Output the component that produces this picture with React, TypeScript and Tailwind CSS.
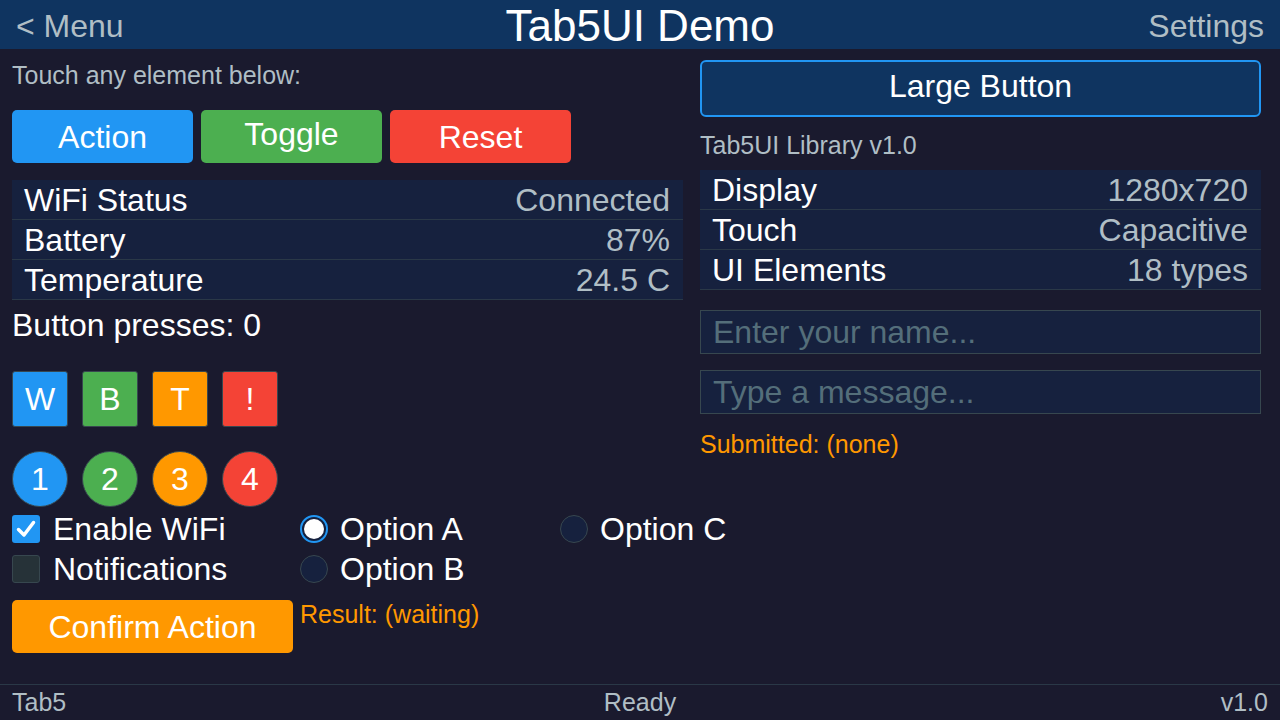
import React from "react";

const font = { fontFamily: '"Liberation Sans", Arial, sans-serif' };

const leftRows = [
  { label: "WiFi Status", value: "Connected" },
  { label: "Battery", value: "87%" },
  { label: "Temperature", value: "24.5 C" },
];

const rightRows = [
  { label: "Display", value: "1280x720" },
  { label: "Touch", value: "Capacitive" },
  { label: "UI Elements", value: "18 types" },
];

const tiles = [
  { text: "W", bg: "bg-[#2196f3]" },
  { text: "B", bg: "bg-[#4caf50]" },
  { text: "T", bg: "bg-[#ff9800]" },
  { text: "!", bg: "bg-[#f44336]" },
];

const dots = [
  { text: "1", bg: "bg-[#2196f3]" },
  { text: "2", bg: "bg-[#4caf50]" },
  { text: "3", bg: "bg-[#ff9800]" },
  { text: "4", bg: "bg-[#f44336]" },
];

function InfoTable({ rows }: { rows: { label: string; value: string }[] }) {
  return (
    <div className="bg-[#16213e]">
      {rows.map((r) => (
        <div
          key={r.label}
          className="flex h-[40px] items-center justify-between border-b border-[#2a3847] pl-[12px] pr-[13px] text-[32px] leading-[40px]"
        >
          <span className="text-white">{r.label}</span>
          <span className="text-[#b0bec5]">{r.value}</span>
        </div>
      ))}
    </div>
  );
}

function Radio({ checked, label }: { checked?: boolean; label: string }) {
  return (
    <div className="flex h-[40px] items-center gap-[12px] whitespace-nowrap">
      {checked ? (
        <div className="flex h-[28px] w-[28px] shrink-0 items-center justify-center rounded-full border-2 border-[#2196f3] bg-[#16213e]">
          <div className="h-[20px] w-[20px] rounded-full bg-white" />
        </div>
      ) : (
        <div className="h-[28px] w-[28px] shrink-0 rounded-full border border-[#37474f] bg-[#16213e]" />
      )}
      <span className="text-[32px] text-white">{label}</span>
    </div>
  );
}

export default function App() {
  return (
    <div
      className="flex h-[720px] w-[1280px] flex-col overflow-hidden bg-[#1a1a2e]"
      style={font}
    >
      {/* header */}
      <div className="flex h-[49px] shrink-0 items-center justify-between bg-[#0f3460] px-[16px] pt-[2px]">
        <span className="w-[200px] text-[32px] leading-none text-[#b0bec5]">&lt; Menu</span>
        <span className="text-[44px] leading-none text-white">Tab5UI Demo</span>
        <span className="w-[200px] text-right text-[32px] leading-none text-[#b0bec5]">Settings</span>
      </div>

      {/* main */}
      <div className="flex flex-1 gap-[17px] pl-[12px]">
        {/* left column */}
        <div className="flex w-[671px] flex-col">
          <div className="mt-[12px] h-[28px] text-[25px] leading-[28px] text-[#b0bec5]">
            Touch any element below:
          </div>
          <div className="mt-[21px] flex gap-[8px]">
            <button className="h-[53px] w-[181px] rounded-[5px] bg-[#2196f3] text-[32px] text-white">
              Action
            </button>
            <button className="h-[53px] w-[181px] rounded-[5px] bg-[#4caf50] pb-[5px] text-[32px] text-white">
              Toggle
            </button>
            <button className="h-[53px] w-[181px] rounded-[5px] bg-[#f44336] text-[32px] text-white">
              Reset
            </button>
          </div>
          <div className="mt-[17px]">
            <InfoTable rows={leftRows} />
          </div>
          <div className="mt-[5px] h-[40px] text-[32px] leading-[40px] text-white">
            Button presses: 0
          </div>
          <div className="mt-[26px] flex gap-[14px]">
            {tiles.map((t) => (
              <div
                key={t.text}
                className={`flex h-[56px] w-[56px] items-center justify-center rounded-[3px] border border-[#37474f] text-[32px] text-white ${t.bg}`}
              >
                {t.text}
              </div>
            ))}
          </div>
          <div className="mt-[24px] flex gap-[14px]">
            {dots.map((d) => (
              <div
                key={d.text}
                className={`flex h-[56px] w-[56px] items-center justify-center rounded-full border border-[#37474f] text-[32px] text-white ${d.bg}`}
              >
                {d.text}
              </div>
            ))}
          </div>
          <div className="mt-[2px] grid grid-cols-[288px_260px_1fr]">
            <div className="flex h-[40px] items-center gap-[13px]">
              <div className="flex h-[28px] w-[28px] items-center justify-center rounded-[3px] bg-[#2196f3]">
                <svg width="22" height="22" viewBox="0 0 22 22">
                  <polyline
                    points="3.5,11.5 9,17 18.5,4.5"
                    fill="none"
                    stroke="white"
                    strokeWidth="3.5"
                    strokeLinecap="round"
                    strokeLinejoin="round"
                  />
                </svg>
              </div>
              <span className="text-[32px] text-white">Enable WiFi</span>
            </div>
            <Radio checked label="Option A" />
            <Radio label="Option C" />
            <div className="flex h-[40px] items-center gap-[13px]">
              <div className="h-[28px] w-[28px] rounded-[3px] border border-[#37474f] bg-[#263238]" />
              <span className="text-[32px] text-white">Notifications</span>
            </div>
            <Radio label="Option B" />
            <div />
          </div>
          <div className="mt-[11px] flex items-start gap-[7px]">
            <button className="h-[53px] w-[281px] rounded-[5px] bg-[#ff9800] text-[32px] text-white">
              Confirm Action
            </button>
            <span className="text-[25px] leading-[28px] text-[#ff9800]">Result: (waiting)</span>
          </div>
        </div>

        {/* right column */}
        <div className="flex w-[561px] flex-col">
          <button className="mt-[11px] h-[57px] w-full rounded-[6px] border-2 border-[#2196f3] bg-[#0f3460] pb-[5px] text-[32px] text-white">
            Large Button
          </button>
          <div className="mt-[14px] h-[28px] text-[25px] leading-[28px] text-[#b0bec5]">
            Tab5UI Library v1.0
          </div>
          <div className="mt-[11px]">
            <InfoTable rows={rightRows} />
          </div>
          <div className="mt-[20px] flex h-[44px] items-center border border-[#37474f] bg-[#16213e] px-[12px] text-[32px] text-[#546e7a]">
            Enter your name...
          </div>
          <div className="mt-[16px] flex h-[44px] items-center border border-[#37474f] bg-[#16213e] px-[12px] text-[32px] text-[#546e7a]">
            Type a message...
          </div>
          <div className="mt-[16px] h-[28px] text-[25px] leading-[28px] text-[#ff9800]">
            Submitted: (none)
          </div>
        </div>
      </div>

      {/* footer */}
      <div className="flex h-[36px] shrink-0 items-center justify-between border-t border-[#2a3847] px-[12px] text-[25px] text-[#b0bec5]">
        <span className="w-[100px]">Tab5</span>
        <span>Ready</span>
        <span className="w-[100px] text-right">v1.0</span>
      </div>
    </div>
  );
}
